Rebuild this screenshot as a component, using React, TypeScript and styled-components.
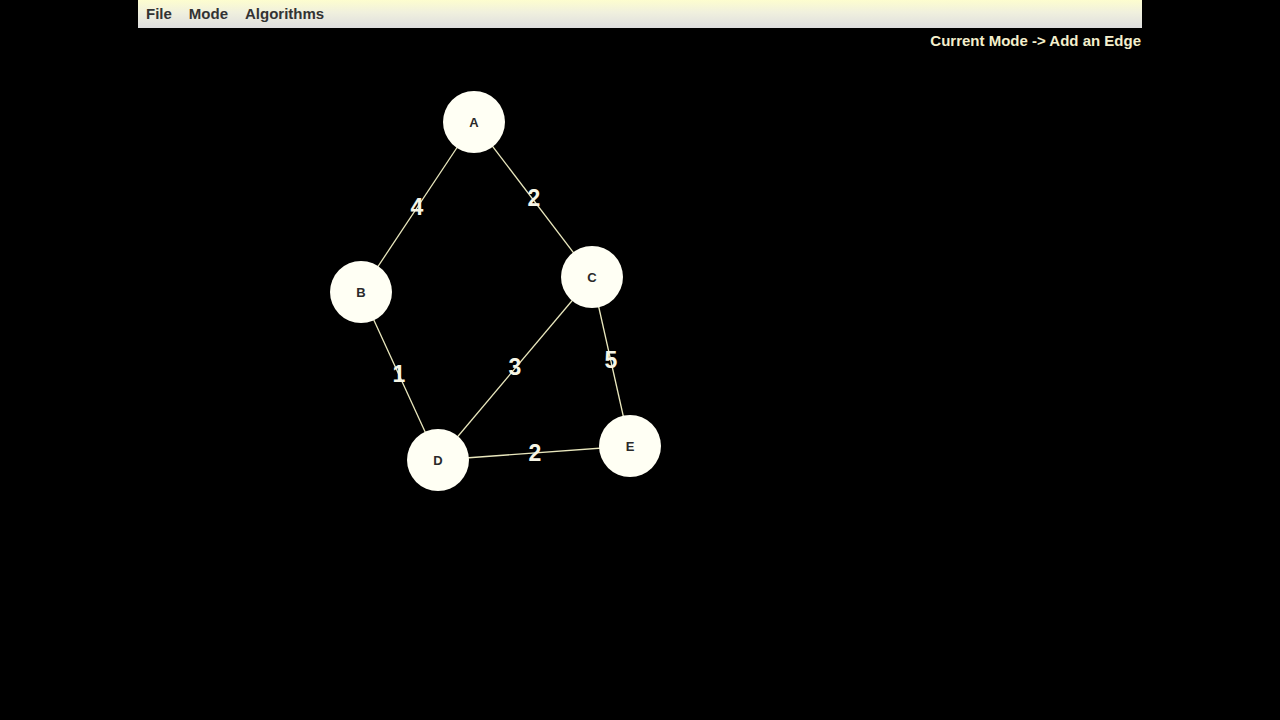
import styled, { createGlobalStyle } from "styled-components";

const GlobalStyle = createGlobalStyle`
  html, body {
    margin: 0;
    padding: 0;
    background: #000;
  }
  body {
    font-family: "Liberation Sans", Arial, sans-serif;
  }
`;

type GraphNode = { id: string; x: number; y: number };
type GraphEdge = { from: string; to: string; w: number; lx: number; ly: number };

// page coordinates, the canvas starts under the header (56px)
const TOP = 56;

const nodes: GraphNode[] = [
  { id: "A", x: 474, y: 122 },
  { id: "B", x: 361, y: 292 },
  { id: "C", x: 592, y: 277 },
  { id: "D", x: 438, y: 460 },
  { id: "E", x: 630, y: 446 },
];

const edges: GraphEdge[] = [
  { from: "A", to: "B", w: 4, lx: 417, ly: 207 },
  { from: "A", to: "C", w: 2, lx: 534, ly: 198 },
  { from: "B", to: "D", w: 1, lx: 399, ly: 374 },
  { from: "C", to: "D", w: 3, lx: 515, ly: 367 },
  { from: "C", to: "E", w: 5, lx: 611, ly: 360 },
  { from: "D", to: "E", w: 2, lx: 535, ly: 453 },
];

const find = (id: string) => nodes.find((n) => n.id === id)!;

const App = () => {
  return (
    <>
      <GlobalStyle />
      <StyledFrame>
        <StyledMenuBar>
          <StyledMenuItem>File</StyledMenuItem>
          <StyledMenuItem>Mode</StyledMenuItem>
          <StyledMenuItem>Algorithms</StyledMenuItem>
        </StyledMenuBar>
        <StyledModeLine>Current Mode -&gt; Add an Edge</StyledModeLine>
      </StyledFrame>
      <StyledCanvas width={1280} height={664} viewBox={`0 ${TOP} 1280 664`}>
        {edges.map((e, i) => {
          const a = find(e.from);
          const b = find(e.to);
          return (
            <line key={i} x1={a.x} y1={a.y} x2={b.x} y2={b.y} stroke="#e9e7bd" strokeWidth={1.3} />
          );
        })}
        {edges.map((e, i) => (
          <StyledWeight key={i} x={e.lx} y={e.ly + 8}>
            {e.w}
          </StyledWeight>
        ))}
        {nodes.map((n) => (
          <g key={n.id}>
            <circle cx={n.x} cy={n.y} r={31} fill="#fffff4" />
            <StyledNodeLabel x={n.x} y={n.y + 5}>
              {n.id}
            </StyledNodeLabel>
          </g>
        ))}
      </StyledCanvas>
    </>
  );
};

const StyledFrame = styled.div`
  width: 1004px;
  margin: 0 auto;
`;
const StyledMenuBar = styled.div`
  height: 28px;
  display: flex;
  align-items: center;
  gap: 17px;
  padding: 0 8px;
  background: linear-gradient(#fdfdcf, #f0f0de 45%, #dedede);
`;
const StyledMenuItem = styled.span`
  font-size: 15px;
  font-weight: bold;
  color: #333333;
  padding-bottom: 2px;
`;
const StyledModeLine = styled.div`
  height: 28px;
  line-height: 26px;
  text-align: right;
  padding-right: 1px;
  font-size: 15px;
  font-weight: bold;
  color: #f4efcc;
`;
const StyledCanvas = styled.svg`
  display: block;
`;
const StyledWeight = styled.text`
  font-family: "Liberation Sans", Arial, sans-serif;
  font-size: 23px;
  font-weight: bold;
  fill: #f6f5e6;
  text-anchor: middle;
`;
const StyledNodeLabel = styled.text`
  font-family: "Liberation Sans", Arial, sans-serif;
  font-size: 13px;
  font-weight: bold;
  fill: #2a2a2a;
  text-anchor: middle;
`;

export default App;
